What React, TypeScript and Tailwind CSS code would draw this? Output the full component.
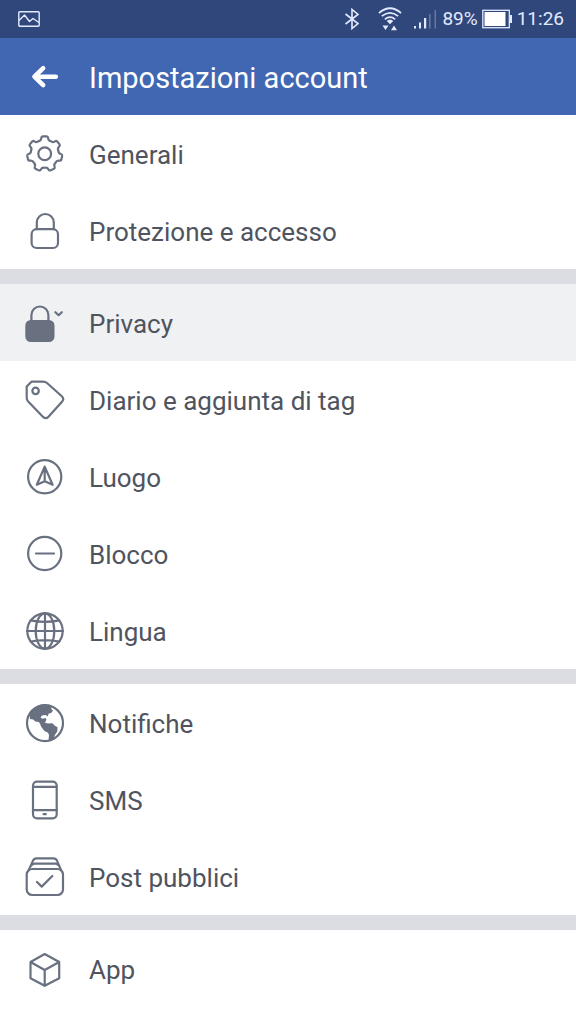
import React from 'react';

interface IconProps {
  children: React.ReactNode;
}

const Icon: React.FC<IconProps> = ({ children }) => (
  <svg
    className="h-[41px] w-[41px] flex-shrink-0 text-[#697180]"
    viewBox="0 0 41 41"
    fill="none"
    stroke="currentColor"
    strokeWidth="2.2"
    strokeLinecap="round"
    strokeLinejoin="round"
    aria-hidden="true"
  >
    {children}
  </svg>
);

const polar = (r: number, deg: number) => {
  const a = ((deg - 90) * Math.PI) / 180;
  return `${(20.7 + r * Math.cos(a)).toFixed(2)} ${(20.8 + r * Math.sin(a)).toFixed(2)}`;
};

// seven teeth with soft shoulders
const gearPath = () => {
  const step = 360 / 7;
  let d = '';
  for (let i = 0; i < 7; i++) {
    const c = i * step;
    d += `${i === 0 ? 'M' : 'L'}${polar(16.2, c - 12)}`;
    d += `Q${polar(17.6, c - 11)} ${polar(17.6, c - 6)}`;
    d += `L${polar(17.6, c + 6)}`;
    d += `Q${polar(17.6, c + 11)} ${polar(16.2, c + 12)}`;
    d += `Q${polar(13.6, c + 15)} ${polar(14, c + step / 2)}`;
    d += `Q${polar(13.6, c + step - 15)} ${polar(16.2, c + step - 12)}`;
  }
  return d + 'Z';
};

const icons = {
  gear: (
    <Icon>
      <path d={gearPath()} />
      <circle cx="20.7" cy="20.8" r="6.4" />
    </Icon>
  ),
  lock: (
    <Icon>
      <rect x="7.6" y="19.2" width="26.4" height="18.8" rx="5" />
      <path d="M12.8 19.2v-6.7a8.5 8.5 0 0 1 17 0v6.7" />
    </Icon>
  ),
  privacy: (
    <Icon>
      <rect x="2.4" y="19" width="27" height="20" rx="4.5" fill="currentColor" />
      <path d="M7.4 19v-6a8.5 8.5 0 0 1 17 0v6" />
      <path d="M31.4 10.2l3.2 3 3.2-3" />
    </Icon>
  ),
  tag: (
    <Icon>
      <path d="M7.5 2.7H19q2.5 0 4.3 1.6L37.8 17.2q2.7 2.5.4 5.2L24.5 37.7q-2.6 2.8-5.4.2L4.2 22.6Q2.7 21 2.7 18.8V7.5z" />
      <circle cx="11.6" cy="11.9" r="3.2" />
    </Icon>
  ),
  place: (
    <Icon>
      <circle cx="20.7" cy="20.7" r="16.6" />
      <path d="M20.7 10.6L12.8 28.8l7.9-3.6 7.9 3.6zM20.7 11v13" />
    </Icon>
  ),
  block: (
    <Icon>
      <circle cx="20.7" cy="20.5" r="16.6" />
      <path d="M12 20.5h18" />
    </Icon>
  ),
  globe: (
    <Icon>
      <circle cx="21" cy="21" r="17.7" />
      <ellipse cx="21" cy="21" rx="9.3" ry="17.7" />
      <path d="M21 3v36M3 21h36M6.6 10.4q14.4 3 28.8 0M6.6 31.6q14.4-3 28.8 0" />
    </Icon>
  ),
  world: (
    <Icon>
      <circle cx="21" cy="21.1" r="18" />
      <g fill="currentColor" stroke="none">
        <path d="M5.5 13C8 6.5 14 2.6 21 2.6l6.5 2-.2 2.4 1.7 1.6-1.8 2.4-2.4.6-1.3 2.8-1.7-1.4-3.8.4-1.500 2.200 2 1.200 3.300-.8.6 1.800-1.200 2.400-3.200.2-1.600 1.200-1.800-1.600-3.400-.6-2-2-3.200-.4z" />
        <path d="M15.500 20.800l3.500-1 4.500 1.600 5-.2 2 2.400 3 1.600-.2 4.200-2.500 3.600-.8 4-4 2.500-1.500-1 .5-5.500-1-2.200-3.500-1.800-3-3.800z" />
      </g>
    </Icon>
  ),
  phone: (
    <Icon>
      <rect x="9" y="2.7" width="23.7" height="36.6" rx="4" />
      <path d="M9 7.8h23.7M9 31.2h23.7M19.600 35.200h2.200" />
    </Icon>
  ),
  posts: (
    <Icon>
      <rect x="2.7" y="13" width="36.3" height="26" rx="5.5" />
      <path d="M4.8 14L9 4.6q1-2.3 3.5-2.3h17q2.5 0 3.5 2.3L37 14M7 9.8q1-2.2 3.8-2.2h20.4q2.8 0 3.8 2.2" />
      <path d="M13 26l4.7 4.6 10.6-10.6" />
    </Icon>
  ),
  cube: (
    <Icon>
      <path d="M20.7 6L35.2 14v16.2l-14.5 7.6-14.2-7.6V14zM6.5 14l14.2 8 14.5-8M20.7 22v15.6" />
    </Icon>
  ),
};

const groups = [
  [
    { label: 'Generali', icon: icons.gear },
    { label: 'Protezione e accesso', icon: icons.lock },
  ],
  [
    { label: 'Privacy', icon: icons.privacy, active: true },
    { label: 'Diario e aggiunta di tag', icon: icons.tag },
    { label: 'Luogo', icon: icons.place },
    { label: 'Blocco', icon: icons.block },
    { label: 'Lingua', icon: icons.globe },
  ],
  [
    { label: 'Notifiche', icon: icons.world },
    { label: 'SMS', icon: icons.phone },
    { label: 'Post pubblici', icon: icons.posts },
  ],
  [{ label: 'App', icon: icons.cube }],
];

const StatusBar: React.FC = () => (
  <div className="flex h-[38px] items-center bg-[#2f477a] pl-[18px] pr-3 text-[19px] text-[#e3eaff]">
    <svg className="h-4 w-[22px]" viewBox="0 0 22 16" fill="none" stroke="currentColor" strokeWidth="1.4" strokeLinejoin="round" aria-hidden="true">
      <rect x=".8" y=".8" width="20.4" height="14.4" rx="1" />
      <path d="M1 9.5L6.5 4l5 6.5L15 7.5l6 4" />
    </svg>
    <div className="ml-auto flex items-center">
      <svg className="h-6 w-4" viewBox="0 0 16 24" fill="none" stroke="currentColor" strokeWidth="1.6" aria-hidden="true">
        <path d="M1.5 7L14 16.5 8 21.5v-19L14 7.5 1.5 17" />
      </svg>
      <svg className="ml-[18px] h-6 w-6" viewBox="0 0 24 24" fill="none" stroke="currentColor" strokeWidth="1.7" aria-hidden="true">
        <path d="M1 6q11-9.5 22 0M3.8 9.2q8.2-6.6 16.4 0M6.8 12.3q5.2-4.2 10.4 0" />
        <path d="M8.7 14q3.3-3 6.6 0L12 17.3zM4.5 18.5h6L7.5 23zM13 23.3h6L16 18.5z" fill="currentColor" stroke="none" />
      </svg>
      <svg className="ml-3 h-6 w-6" viewBox="0 0 24 24" fill="currentColor" aria-hidden="true">
        <path d="M0 19h2v2.5H0zM5 15.5h2v6H5zM10 11h2.2v10.5H10z" />
        <path d="M15 7h1.6v14.5H15zM20.5 3H22v18.5h-1.5z" opacity=".3" />
      </svg>
      <span className="ml-1">89%</span>
      <svg className="ml-1 h-5 w-[31px]" viewBox="0 0 31 20" aria-hidden="true">
        <rect x=".8" y="1.3" width="26.5" height="17.4" fill="none" stroke="currentColor" strokeWidth="1.3" />
        <path d="M2.5 3h21v14h-21z" fill="#fff" />
        <path d="M28 6h2v8h-2z" fill="currentColor" />
      </svg>
      <span className="ml-1">11:26</span>
    </div>
  </div>
);

export default function App() {
  return (
    <div className="min-h-screen bg-white font-[Roboto,sans-serif]">
      <StatusBar />
      <header className="flex h-[77px] items-center gap-6 bg-[#4267b2] px-6 text-white">
        <button type="button" aria-label="Indietro" className="flex-shrink-0">
          <svg className="block h-[41px] w-[41px]" viewBox="0 0 41 41" fill="none" stroke="currentColor" strokeWidth="4.5" strokeLinecap="round" strokeLinejoin="round" aria-hidden="true">
            <path d="M19.2 12.2L10.4 20.7l8.8 8.5M11 20.7h20.8" />
          </svg>
        </button>
        <h1 className="truncate pt-1 text-[29px]">Impostazioni account</h1>
      </header>
      <main>
        {groups.map((items, idx) => (
          <nav key={idx} className={idx > 0 ? 'border-t-[15px] border-[#dcdde3]' : ''}>
            {items.map(item => (
              <a
                key={item.label}
                href="#"
                className={`flex h-[77px] items-center gap-6 px-6 text-[26px] text-[#4f545e] ${
                  'active' in item ? 'bg-[#eff1f3]' : 'bg-white'
                }`}
              >
                {item.icon}
                <span className="truncate pt-[3px]">{item.label}</span>
              </a>
            ))}
          </nav>
        ))}
      </main>
    </div>
  );
}
